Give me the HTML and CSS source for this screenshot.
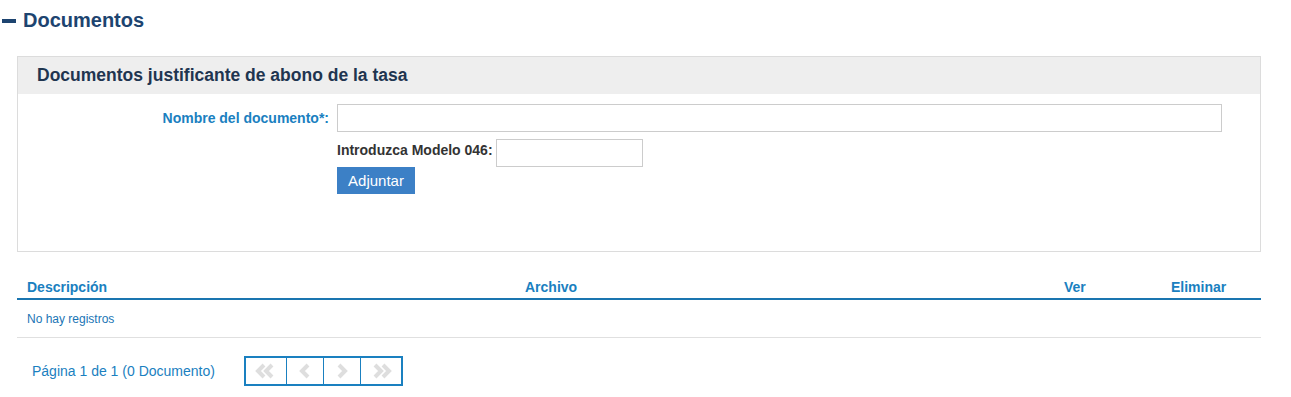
FILE: index.html
```html
<!DOCTYPE html>
<html lang="es">
<head>
  <meta charset="UTF-8">
  <title>Documentos</title>
  <link rel="stylesheet" href="styles.css">
</head>
<body>

  <!-- Section title -->
  <h2 class="section-title"><span class="dash"></span>Documentos</h2>

  <!-- Panel -->
  <div class="panel">
    <div class="panel-head">Documentos justificante de abono de la tasa</div>
    <div class="panel-body">
      <div class="form-row">
        <label class="label-main">Nombre del documento*:</label>
        <input type="text" class="input-name">
      </div>
      <div class="form-row sub">
        <label class="label-sub">Introduzca Modelo 046:</label>
        <input type="text" class="input-code">
      </div>
      <div class="form-row sub">
        <button class="btn">Adjuntar</button>
      </div>
    </div>
  </div>

  <!-- Table -->
  <table class="grid">
    <thead>
      <tr>
        <th class="col-desc">Descripción</th>
        <th class="col-file">Archivo</th>
        <th class="col-ver">Ver</th>
        <th class="col-del">Eliminar</th>
      </tr>
    </thead>
    <tbody>
      <tr><td colspan="4" class="empty">No hay registros</td></tr>
    </tbody>
  </table>

  <!-- Pager -->
  <div class="pager">
    <span class="pager-text">Página 1 de 1 (0 Documento)</span>
    <div class="pager-btns">
      <span class="pbtn wide">
        <svg width="24" height="16" viewBox="0 0 24 16"><path d="M10 2 L4 8 L10 14 M18 2 L12 8 L18 14" fill="none" stroke="#dedede" stroke-width="4"/></svg>
      </span>
      <span class="pbtn">
        <svg width="12" height="16" viewBox="0 0 12 16"><path d="M9 2 L3 8 L9 14" fill="none" stroke="#dedede" stroke-width="4"/></svg>
      </span>
      <span class="pbtn">
        <svg width="12" height="16" viewBox="0 0 12 16"><path d="M3 2 L9 8 L3 14" fill="none" stroke="#dedede" stroke-width="4"/></svg>
      </span>
      <span class="pbtn wide">
        <svg width="24" height="16" viewBox="0 0 24 16"><path d="M6 2 L12 8 L6 14 M14 2 L20 8 L14 14" fill="none" stroke="#dedede" stroke-width="4"/></svg>
      </span>
    </div>
  </div>

</body>
</html>
```

FILE: styles.css
```css
body {
  margin: 0;
  padding: 0 30px 0 0;
  font-family: 'Liberation Sans', Arial, sans-serif;
  color: #333;
  background: #fff;
}
.section-title {
  display: flex;
  align-items: center;
  margin: 0;
  padding: 10px 0 0 2px;
  height: 21px;
  font-size: 20px;
  font-weight: bold;
  color: #1d4470;
}
.dash {
  display: inline-block;
  width: 14px;
  height: 4px;
  background: #1d4470;
  margin-right: 7px;
}
.panel {
  margin: 25px 0 0 17px;
  border: 1px solid #dcdcdc;
  height: 194px;
}
.panel-head {
  background: #eeeeee;
  height: 37px;
  line-height: 37px;
  padding-left: 19px;
  font-size: 17.5px;
  font-weight: bold;
  color: #1f3550;
}
.panel-body {
  padding-top: 10px;
}
.form-row {
  display: flex;
  align-items: center;
}
.form-row.sub {
  padding-left: 319px;
}
.label-main {
  width: 311px;
  text-align: right;
  padding-right: 8px;
  font-size: 14px;
  font-weight: bold;
  color: #1a80c0;
}
.label-sub {
  font-size: 14px;
  font-weight: bold;
  color: #333;
  margin-right: 3px;
}
input {
  border: 1px solid #cccccc;
  height: 28px;
  box-sizing: border-box;
  font-family: inherit;
  font-size: 13px;
  padding: 2px 4px;
  margin: 0;
}
.input-name {
  width: 885px;
}
.input-code {
  width: 147px;
  margin-top: 7px;
}
.btn {
  background: #3c80c6;
  color: #fff;
  border: none;
  height: 27px;
  width: 78px;
  font-family: inherit;
  font-size: 15px;
  padding: 0;
  cursor: pointer;
}
.grid {
  margin: 23px 0 0 17px;
  width: 1244px;
  border-collapse: collapse;
}
.grid th {
  font-size: 14px;
  font-weight: bold;
  color: #1a80c0;
  text-align: left;
  height: 23px;
  padding: 0 10px 0 10px;
  border-bottom: 2px solid #1a75b0;
}
.grid th.col-desc { width: 478px; }
.grid th.col-file { width: 519px; }
.grid th.col-ver { width: 87px; }
.grid td.empty {
  font-size: 12px;
  color: #1a75b5;
  height: 37px;
  padding: 0 10px;
  border-bottom: 1px solid #e0e0e0;
}
.pager {
  display: flex;
  align-items: center;
  margin: 18px 0 0 32px;
}
.pager-text {
  font-size: 14px;
  color: #1a80c0;
  width: 212px;
}
.pager-btns {
  display: flex;
  border: 2px solid #1a80c0;
  height: 26px;
}
.pbtn {
  display: flex;
  align-items: center;
  justify-content: center;
  width: 36px;
  border-left: 1px solid #1a80c0;
}
.pbtn:first-child {
  border-left: none;
}
.pbtn.wide {
  width: 40px;
}
```
